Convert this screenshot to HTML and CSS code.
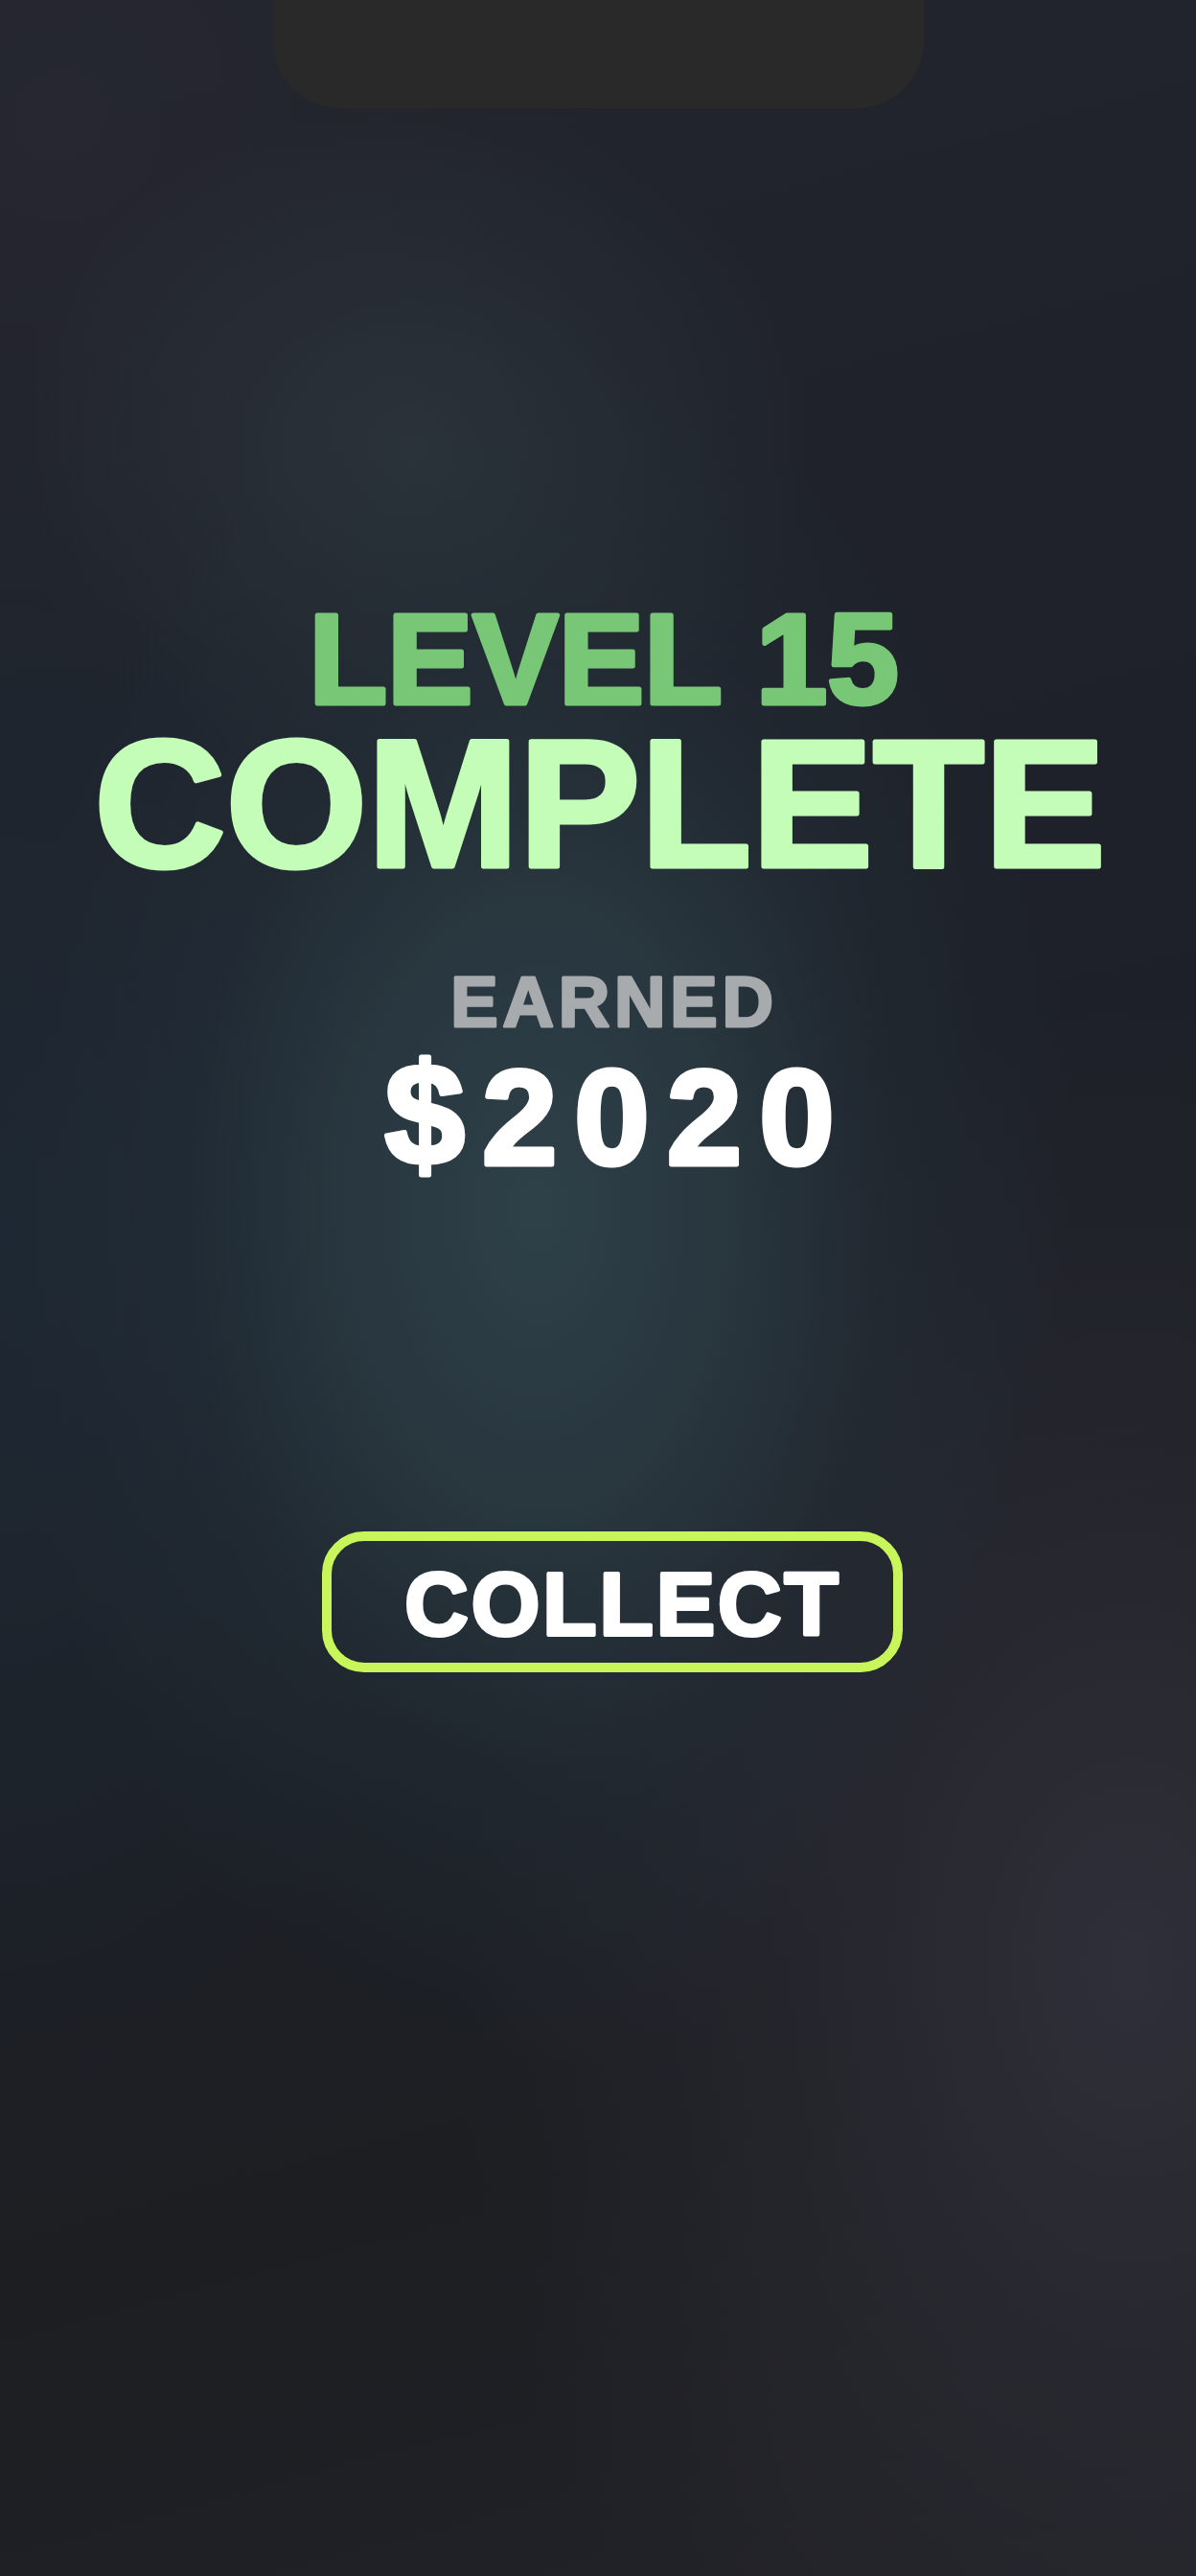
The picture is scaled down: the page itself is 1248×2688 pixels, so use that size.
FILE: index.html
```html
<!DOCTYPE html>
<html lang="en">
<head>
<meta charset="utf-8">
<title>Level Complete</title>
<link rel="stylesheet" href="styles.css">
</head>
<body>
<div class="screen">
  <div class="notch"></div>
  <main class="result">
    <svg class="line line-level" viewBox="0 0 1248 120" width="1248" height="120">
      <text class="txt txt-level" x="630" y="109" text-anchor="middle">LEVEL 15</text>
    </svg>
    <svg class="line line-complete" viewBox="0 0 1248 170" width="1248" height="170">
      <text class="txt txt-complete" x="626" y="159" text-anchor="middle">COMPLETE</text>
    </svg>
    <svg class="line line-earned" viewBox="0 0 1248 80" width="1248" height="80">
      <text class="txt txt-earned" x="641" y="71" text-anchor="middle">EARNED</text>
    </svg>
    <svg class="line line-amount" viewBox="0 0 1248 180" width="1248" height="180">
      <text class="txt txt-amount" x="645" y="135" text-anchor="middle"><tspan class="dollar">$</tspan>2020</text>
    </svg>
    <button class="collect" type="button">
      <svg class="collect-label" viewBox="0 0 586 127" width="586" height="127">
        <text class="txt txt-collect" x="304" y="98" text-anchor="middle">COLLECT</text>
      </svg>
    </button>
  </main>
</div>
</body>
</html>
```
FILE: styles.css
```css
html, body {
  margin: 0;
  padding: 0;
}
body {
  width: 1248px;
  height: 2688px;
  overflow: hidden;
  background: #1c1e23;
}
.screen {
  width: 1248px;
  height: 2688px;
  display: flex;
  flex-direction: column;
  align-items: center;
  background:
    radial-gradient(ellipse 560px 900px at 560px 1260px, rgba(47, 66, 74, 0.95) 0%, rgba(44, 62, 70, 0.75) 35%, rgba(36, 50, 60, 0.4) 65%, rgba(30, 40, 50, 0) 100%),
    radial-gradient(ellipse 420px 360px at 430px 470px, rgba(46, 56, 62, 0.75) 0%, rgba(40, 48, 56, 0) 100%),
    radial-gradient(ellipse 700px 1000px at 1180px 2050px, rgba(48, 48, 58, 0.95) 0%, rgba(44, 43, 52, 0.6) 45%, rgba(36, 36, 44, 0) 100%),
    radial-gradient(ellipse 520px 900px at 0px 1300px, rgba(30, 42, 54, 0.8) 0%, rgba(30, 42, 54, 0) 100%),
    radial-gradient(ellipse 600px 600px at 60px 120px, rgba(40, 40, 50, 0.6) 0%, rgba(40, 40, 50, 0) 100%),
    linear-gradient(165deg, #22252d 0%, #1e2129 35%, #1c1f25 65%, #1c1e22 80%, #222228 100%);
  font-family: "Liberation Sans", Arial, sans-serif;
}
.notch {
  flex: none;
  width: 679px;
  height: 113px;
  background: #292929;
  border-radius: 0 0 70px 70px;
}
.result {
  display: flex;
  flex-direction: column;
  align-items: center;
}
.line {
  display: block;
  flex: none;
  overflow: visible;
}
.line-level {
  margin-top: 512px;
}
.line-earned {
  margin-top: 85px;
}
.txt {
  font-family: "Liberation Sans", Arial, sans-serif;
  font-weight: 700;
  stroke-linejoin: round;
  stroke-linecap: round;
  paint-order: stroke fill;
}
.txt-level {
  font-size: 134px;
  fill: #77c777;
  stroke: #77c777;
  stroke-width: 5px;
}
.txt-complete {
  font-size: 190px;
  fill: #c4fdb8;
  stroke: #c4fdb8;
  stroke-width: 5px;
}
.txt-earned {
  font-size: 74px;
  letter-spacing: 4.8px;
  fill: #a7abae;
  stroke: #a7abae;
  stroke-width: 3px;
}
.txt-amount {
  font-size: 141px;
  letter-spacing: 18px;
  fill: #ffffff;
  stroke: #ffffff;
  stroke-width: 5px;
}
.dollar {
  font-size: 150px;
}
.collect {
  flex: none;
  margin-top: 338px;
  margin-left: 30px;
  width: 606px;
  height: 147px;
  box-sizing: border-box;
  padding: 0;
  border: 10px solid #c8f65a;
  border-radius: 44px;
  background: transparent;
  display: flex;
  cursor: pointer;
}
.collect-label {
  display: block;
  overflow: visible;
}
.txt-collect {
  font-size: 92px;
  letter-spacing: 3px;
  fill: #ffffff;
  stroke: #ffffff;
  stroke-width: 4px;
}
```
